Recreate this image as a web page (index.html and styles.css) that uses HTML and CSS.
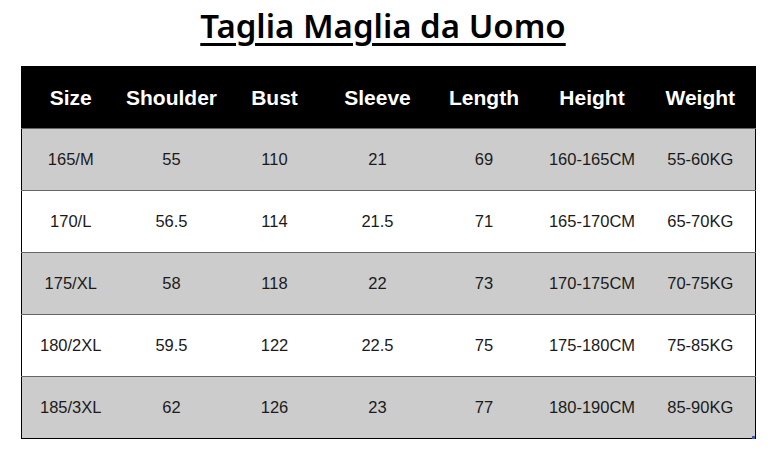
FILE: index.html
```html
<!DOCTYPE html>
<html lang="it">
<head>
<meta charset="utf-8">
<title>Taglia Maglia da Uomo</title>
<link rel="stylesheet" href="styles.css">
</head>
<body>
<div class="page">
  <h1 class="title">Taglia Maglia da Uomo</h1>
  <div class="table-wrap">
    <table class="sizes">
      <colgroup>
        <col class="c1"><col class="c2"><col class="c3"><col class="c4"><col class="c5"><col class="c6"><col class="c7">
      </colgroup>
      <thead>
        <tr><th>Size</th><th>Shoulder</th><th>Bust</th><th>Sleeve</th><th>Length</th><th>Height</th><th>Weight</th></tr>
      </thead>
      <tbody>
        <tr class="gray"><td>165/M</td><td>55</td><td>110</td><td>21</td><td>69</td><td>160-165CM</td><td>55-60KG</td></tr>
        <tr><td>170/L</td><td>56.5</td><td>114</td><td>21.5</td><td>71</td><td>165-170CM</td><td>65-70KG</td></tr>
        <tr class="gray"><td>175/XL</td><td>58</td><td>118</td><td>22</td><td>73</td><td>170-175CM</td><td>70-75KG</td></tr>
        <tr><td>180/2XL</td><td>59.5</td><td>122</td><td>22.5</td><td>75</td><td>175-180CM</td><td>75-85KG</td></tr>
        <tr class="gray"><td>185/3XL</td><td>62</td><td>126</td><td>23</td><td>77</td><td>180-190CM</td><td>85-90KG</td></tr>
      </tbody>
    </table>
    <span class="corner"></span>
  </div>
</div>
</body>
</html>
```
FILE: styles.css
```css
html, body {
  margin: 0;
  padding: 0;
  background: #ffffff;
}
.page {
  width: 776px;
  height: 458px;
  padding-top: 6px;
  box-sizing: border-box;
}
.title {
  margin: 0 0 0 -10px;
  height: 60px;
  text-align: center;
  font-family: "Noto Sans", "Liberation Sans", sans-serif;
  font-weight: 600;
  font-size: 33px;
  line-height: 40px;
  color: #000;
  text-decoration: underline;
  text-decoration-thickness: 3px;
  text-underline-offset: 5px;
}
.table-wrap {
  position: relative;
  width: 734px;
  margin-left: 21px;
}
.sizes {
  width: 734px;
  border-collapse: collapse;
  table-layout: fixed;
  border: 1px solid #000;
}
.c1 { width: 98px; }
.c2 { width: 104px; }
.c3 { width: 102px; }
.c4 { width: 104px; }
.c5 { width: 109px; }
.c6 { width: 107px; }
.c7 { width: 110px; }
.sizes th {
  background: #000;
  color: #fff;
  height: 61px;
  padding: 0;
  font-family: "Liberation Sans", Arial, sans-serif;
  font-weight: 700;
  font-size: 21px;
  text-align: center;
}
.sizes td {
  height: 61px;
  padding: 0;
  border-top: 1px solid #666;
  font-family: "Liberation Sans", Arial, sans-serif;
  font-size: 16.5px;
  color: #1a1a1a;
  text-align: center;
}
.sizes tr.gray td {
  background: #cccccc;
}
.corner {
  position: absolute;
  right: 0;
  bottom: 0;
  width: 3px;
  height: 3px;
  background: #3b55b8;
}
```
